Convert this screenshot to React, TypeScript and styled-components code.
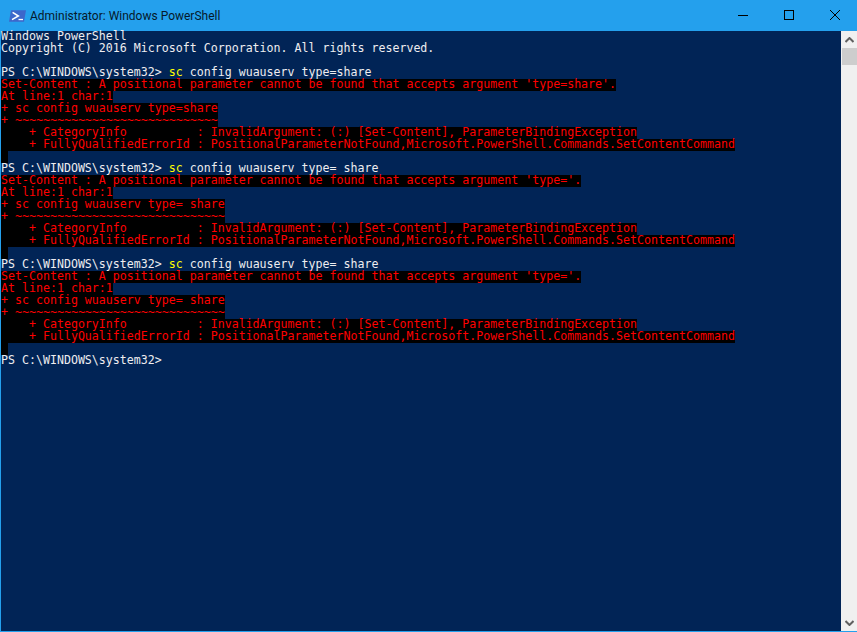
import React from "react";
import styled, { createGlobalStyle } from "styled-components";

const Global = createGlobalStyle`
  html, body { margin: 0; padding: 0; background: #24a0ed; }
  #root { width: 857px; height: 632px; overflow: hidden; }
`;

const Window = styled.div`
  width: 857px;
  height: 632px;
  box-sizing: border-box;
  display: flex;
  flex-direction: column;
  background: #24a0ed;
  border: solid #24a0ed;
  border-width: 0 0 1px 1px;
`;

const TitleBar = styled.div`
  height: 31px;
  flex: none;
  display: flex;
  align-items: center;
  padding-left: 8px;
`;

const AppIcon = styled.svg`
  width: 17px;
  height: 12px;
  flex: none;
  margin-right: 4px;
`;

const Title = styled.div`
  flex: 1;
  font: 12px Roboto, "Open Sans", sans-serif;
  color: #06192b;
  white-space: nowrap;
`;

const CaptionButton = styled.button`
  width: 46px;
  height: 31px;
  box-sizing: border-box;
  padding: 0 0 1px 2px;
  border: 0;
  background: transparent;
  display: flex;
  align-items: center;
  justify-content: center;
`;

const Body = styled.div`
  flex: 1;
  min-height: 0;
  display: flex;
`;

const Console = styled.div`
  flex: 1;
  background: #012456;
  font: 11.62px/10px "DejaVu Sans Mono", "Liberation Mono", monospace;
  color: #eeedf0;
  white-space: pre;
`;

const Line = styled.div`
  height: 12px;
`;

const Chunk = styled.span<{ $kind: "err" | "cmd" }>`
  display: inline-block;
  height: ${(p) => (p.$kind === "err" ? "12px" : "10px")};
  color: ${(p) => (p.$kind === "err" ? "#ff0000" : "#ffff00")};
  background: ${(p) => (p.$kind === "err" ? "#000000" : "transparent")};
`;

const ScrollBar = styled.div`
  width: 16px;
  flex: none;
  background: #f0f0f0;
  display: flex;
  flex-direction: column;
`;

const ScrollArrow = styled.div`
  height: 17px;
  flex: none;
  display: flex;
  align-items: center;
  justify-content: center;
`;

const ScrollThumb = styled.div`
  height: 17px;
  flex: none;
  background: #cdcdcd;
  margin-left: 1px;
`;

const ScrollTrack = styled.div`
  flex: 1;
`;

const blocks = [
  {
    cmd: "type=share",
    msg: "Set-Content : A positional parameter cannot be found that accepts argument 'type=share'.",
    echo: "+ sc config wuauserv type=share",
  },
  {
    cmd: "type= share",
    msg: "Set-Content : A positional parameter cannot be found that accepts argument 'type='.",
    echo: "+ sc config wuauserv type= share",
  },
  {
    cmd: "type= share",
    msg: "Set-Content : A positional parameter cannot be found that accepts argument 'type='.",
    echo: "+ sc config wuauserv type= share",
  },
];

export default function App() {
  return (
    <Window>
      <Global />
      <TitleBar>
        <AppIcon viewBox="0 0 17 12">
          <path d="M2 .2h15L15 11.8H0z" fill="#3c67cb" />
          <path d="M3.6 2.4 9.4 6 3 9.6" fill="none" stroke="#fff" strokeWidth="1.5" />
          <path d="M9.5 9.5h4.5" stroke="#fff" strokeWidth="1.3" />
        </AppIcon>
        <Title>Administrator: Windows PowerShell</Title>
        <CaptionButton aria-label="Minimize">
          <svg width="10" height="10" viewBox="0 0 10 10">
            <path d="M0 5.5h10" stroke="#000" fill="none" />
          </svg>
        </CaptionButton>
        <CaptionButton aria-label="Maximize">
          <svg width="10" height="10" viewBox="0 0 10 10">
            <rect x=".5" y=".5" width="9" height="9" stroke="#000" fill="none" />
          </svg>
        </CaptionButton>
        <CaptionButton aria-label="Close">
          <svg width="10" height="10" viewBox="0 0 10 10">
            <path d="M0 0l10 10M10 0 0 10" stroke="#000" fill="none" />
          </svg>
        </CaptionButton>
      </TitleBar>
      <Body>
        <Console>
          <Line>Windows PowerShell</Line>
          <Line>Copyright (C) 2016 Microsoft Corporation. All rights reserved.</Line>
          <Line />
          {blocks.map((b, i) => (
            <React.Fragment key={i}>
              <Line>
                PS C:\WINDOWS\system32&gt; <Chunk $kind="cmd">sc</Chunk> config wuauserv {b.cmd}
              </Line>
              <Line><Chunk $kind="err">{b.msg}</Chunk></Line>
              <Line><Chunk $kind="err">At line:1 char:1</Chunk></Line>
              <Line><Chunk $kind="err">{b.echo}</Chunk></Line>
              <Line><Chunk $kind="err">{"+ " + "~".repeat(b.echo.length - 2)}</Chunk></Line>
              <Line><Chunk $kind="err">{"    + CategoryInfo          : InvalidArgument: (:) [Set-Content], ParameterBindingException"}</Chunk></Line>
              <Line><Chunk $kind="err">{"    + FullyQualifiedErrorId : PositionalParameterNotFound,Microsoft.PowerShell.Commands.SetContentCommand"}</Chunk></Line>
              <Line><Chunk $kind="err">{" "}</Chunk></Line>
            </React.Fragment>
          ))}
          <Line>PS C:\WINDOWS\system32&gt;</Line>
        </Console>
        <ScrollBar>
          <ScrollArrow>
            <svg width="9" height="6" viewBox="0 0 9 6">
              <path d="M.5 5 4.5 1l4 4" stroke="#606060" strokeWidth="2" fill="none" />
            </svg>
          </ScrollArrow>
          <ScrollThumb />
          <ScrollTrack />
          <ScrollArrow>
            <svg width="9" height="6" viewBox="0 0 9 6">
              <path d="M.5 1l4 4 4-4" stroke="#606060" strokeWidth="2" fill="none" />
            </svg>
          </ScrollArrow>
        </ScrollBar>
      </Body>
    </Window>
  );
}
